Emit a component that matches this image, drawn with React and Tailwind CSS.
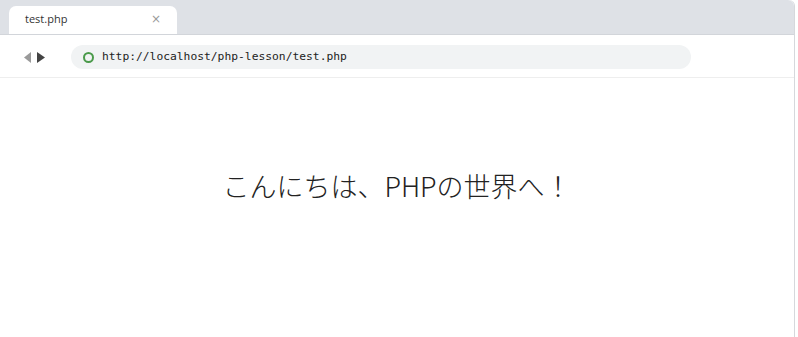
import React from "react";

export default function App() {
  return (
    <div className="w-[798px] h-[337px] bg-white overflow-hidden">
      <div className="w-[795px] h-full border-r border-[#d6d8dc] rounded-tr-[6px] flex flex-col">
        {/* Tab strip */}
        <div className="h-[35px] bg-[#dee1e6] border-b border-[#d2d5da] flex items-end pl-[9px] rounded-tr-[6px]">
          <div className="w-[168px] h-[28px] bg-white rounded-t-[7px] flex items-center justify-between px-4 pb-[2px]">
            <span className="text-[11px] text-[#333] font-['Open_Sans',sans-serif]">test.php</span>
            <span className="text-[12px] text-[#9a9a9a] leading-none font-['DejaVu_Sans',sans-serif]">×</span>
          </div>
        </div>

        {/* Address row */}
        <div className="h-[43px] flex items-center border-b border-[#eeeeee] pt-[2px]">
          <div className="flex items-center gap-[2px] pl-[24px] w-[71px]">
            <svg width="7" height="11" viewBox="0 0 7 11">
              <polygon points="7,0 0,5.5 7,11" fill="#9a9a9a" />
            </svg>
            <svg width="8" height="11" viewBox="0 0 8 11" className="ml-[4px]">
              <polygon points="0,0 8,5.5 0,11" fill="#444" />
            </svg>
          </div>
          <div className="w-[620px] h-[24px] bg-[#f1f3f4] rounded-full flex items-center pl-[12px]">
            <span className="w-[11px] h-[11px] rounded-full border-2 border-[#4a9a4a]" />
            <span className="ml-[8px] text-[11.3px] text-[#222] font-['DejaVu_Sans_Mono',monospace]">
              http://localhost/php-lesson/test.php
            </span>
          </div>
        </div>

        {/* Page */}
        <div className="flex-1 flex justify-center pt-[90px]">
          <h1 className="text-[27px] leading-[36px] font-light text-[#222] font-['Noto_Sans_CJK_JP','Noto_Sans',sans-serif]">
            こんにちは、PHPの世界へ！
          </h1>
        </div>
      </div>
    </div>
  );
}
